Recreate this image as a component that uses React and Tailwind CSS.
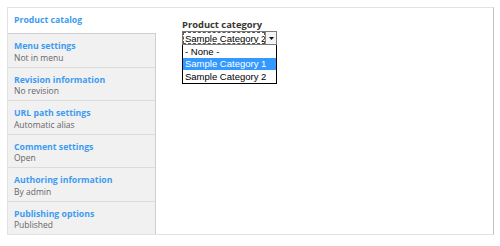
import React from "react";

const tabs = [
  { title: "Menu settings", summary: "Not in menu" },
  { title: "Revision information", summary: "No revision" },
  { title: "URL path settings", summary: "Automatic alias" },
  { title: "Comment settings", summary: "Open" },
  { title: "Authoring information", summary: "By admin" },
  { title: "Publishing options", summary: "Published" },
];

const options = ["- None -", "Sample Category 1", "Sample Category 2"];

const VerticalTab = ({ title, summary }) => (
  <div className="h-[33.5px] shrink-0 px-[6px] pt-[8px] border-t border-[#dcdcdc] leading-none">
    <p className="text-[8.7px] font-bold text-[#3d9cf0]">{title}</p>
    <p className="mt-[3px] text-[8.5px] text-[#666]">{summary}</p>
  </div>
);

export default function App() {
  return (
    <div className="w-[500px] h-[246px] bg-white pl-[7px] pt-[7px] font-['Open_Sans',sans-serif]">
      <div className="flex w-[487px] h-[228px] border-l border-t border-b border-[#e2e2e2] border-r border-r-[#c4c4c4]">
        {/* SIDEBAR */}
        <div className="flex flex-col w-[148px]">
          <div className="h-[25px] shrink-0 px-[6px] pt-[8px] leading-none bg-white">
            <p className="text-[8.7px] font-bold text-[#3d9cf0]">Product catalog</p>
          </div>
          <div className="flex-1 flex flex-col bg-[#f1f1f1] border-r border-[#cfcfcf] [&>div:first-child]:border-[#cfcfcf]">
            {tabs.map((tab) => (
              <VerticalTab key={tab.title} {...tab} />
            ))}
          </div>
        </div>

        {/* PANE */}
        <div className="flex-1 pl-[26px] pt-[12px]">
          <p className="text-[9.4px] font-bold text-[#3a3530] leading-none">Product category</p>

          <div className="relative mt-[2px] w-[95px] font-['Liberation_Sans',Arial,sans-serif] text-[9.5px] text-black">
            {/* SELECT */}
            <div className="flex h-[14px] border border-[#7a7a7a] bg-white">
              <div className="flex-1 flex items-center overflow-hidden whitespace-nowrap border border-dashed border-[#555] pl-[1px] leading-none">
                Sample Category 2
              </div>
              <div className="flex items-center justify-center w-[11px] border-l border-[#888] bg-[#f4f4f4]">
                <svg width="5" height="3" viewBox="0 0 5 3">
                  <path d="M0 0h5L2.5 3z" fill="#111" />
                </svg>
              </div>
            </div>

            {/* LIST */}
            <div className="border border-black border-t-0 bg-white">
              {options.map((opt, i) => (
                <div
                  key={opt}
                  className={
                    i === 1
                      ? "h-[12.4px] flex items-center px-[2px] bg-[#3399ff] text-white leading-none"
                      : "h-[12.4px] flex items-center px-[2px] leading-none"
                  }
                >
                  {opt}
                </div>
              ))}
            </div>
          </div>
        </div>
      </div>
    </div>
  );
}
